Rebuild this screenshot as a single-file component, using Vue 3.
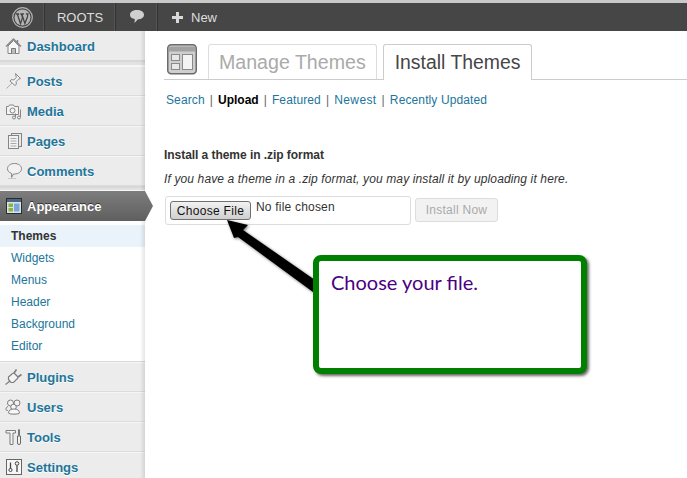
<script setup>
const groupOne = [
  { label: 'Posts', icon: 'posts' },
  { label: 'Media', icon: 'media' },
  { label: 'Pages', icon: 'pages' },
  { label: 'Comments', icon: 'comments' },
]
const subItems = ['Widgets', 'Menus', 'Header', 'Background', 'Editor']
const groupTwo = [
  { label: 'Plugins', icon: 'plugins' },
  { label: 'Users', icon: 'users' },
  { label: 'Tools', icon: 'tools' },
  { label: 'Settings', icon: 'settings' },
]
const links = [
  { label: 'Search' },
  { label: 'Upload', current: true },
  { label: 'Featured' },
  { label: 'Newest' },
  { label: 'Recently Updated', last: true },
]
</script>

<template>
  <div class="page">
    <header class="bar">
      <div class="bar-item wp">
        <svg width="21" height="21" viewBox="0 0 21 21">
          <circle cx="10.5" cy="10.5" r="9.8" fill="none" stroke="#b5b5b5" stroke-width="1.2" />
          <circle cx="10.5" cy="10.5" r="8" fill="#b5b5b5" />
          <path d="M3.800 7h3.400M8.300 7h3.600M13.800 6.800h2.800M5.400 7.200 8.500 16.600l2-6-1-3.400M9.900 7.200l3 9.400 2.600-6.800c.5-1.400.2-2.200-.6-3" fill="none" stroke="#464646" stroke-width="1.300" />
        </svg>
      </div>
      <div class="bar-item roots">ROOTS</div>
      <div class="bar-item bubble">
        <svg width="16" height="16" viewBox="0 0 16 16">
          <path d="M8 1c4 0 7 1.800 7 4.700 0 2.800-3 4.600-6 4.600L5.500 14l.3-3.900C3 9.600 1 8.200 1 5.700 1 2.800 4 1 8 1z" fill="#cfcfcf" />
        </svg>
      </div>
      <div class="bar-item new"><span class="plus"></span><span>New</span></div>
    </header>

    <div class="body">
      <aside class="side">
        <div class="item first">
          <svg class="ico" width="18" height="18" viewBox="0 0 18 18" fill="none" stroke="#858585">
            <path d="M1 9.500 8.500 2l7.500 7.500M12.500 3v3" stroke-width="1.400" />
            <path d="M3 9v7.500h11V9L8.500 3.500z" fill="#f7f7f7" />
            <path d="M6.500 16.500V11.500h4v5" stroke="#777" fill="#bdbdbd" />
          </svg>
          <span>Dashboard</span>
        </div>
        <div class="sep"></div>
        <div v-for="m in groupOne" :key="m.label" class="item">
          <svg class="ico" width="18" height="18" viewBox="0 0 18 18" fill="none" stroke="#858585">
            <template v-if="m.icon === 'posts'">
              <path d="M1.500 16.500 7 11" stroke="#aaa" />
              <path d="M10.500 1.500l5 5-2 .7-2.500 2.500.4 2.600-1.400 1.200L5 9l1.200-1.400 2.600.4 2.500-2.500z" fill="#f4f4f4" />
            </template>
            <template v-else-if="m.icon === 'media'">
              <path d="M1.500 4.500h2l1-1.500h4l1 1.500h4v8h-12z" fill="#f4f4f4" />
              <circle cx="7.500" cy="8.500" r="2.500" />
              <path d="M15.500 7.500v7.500M10.500 11.500v4" />
              <circle cx="9" cy="15.500" r="1.500" fill="#ececec" />
              <circle cx="14" cy="15.500" r="1.500" fill="#ececec" />
            </template>
            <template v-else-if="m.icon === 'pages'">
              <rect x="6.500" y="1.500" width="10" height="13" fill="#e8e8e8" />
              <rect x="3.500" y="3.500" width="10" height="13" fill="#f2f2f2" />
              <path d="M5.500 6.500h6M5.500 9h6M5.500 11.500h6M5.500 14h6" stroke="#aaa" />
            </template>
            <template v-else>
              <path d="M9.500 1.500c3.900 0 7 2.200 7 5.200s-3.100 5.300-7 5.300h-1L6.500 15.500l.2-4C4 10.500 2.500 8.800 2.500 6.700c0-3 3.100-5.200 7-5.200z" fill="#f2f2f2" />
              <path d="M3 16.500h8" stroke="#c8c8c8" />
            </template>
          </svg>
          <span>{{ m.label }}</span>
        </div>
        <div class="sep small"></div>
        <div class="current">
          <svg class="ico" width="16" height="16" viewBox="0 0 16 16">
            <rect x="0.500" y="0.500" width="15" height="15" fill="#d7e3ee" stroke="#2b2b2b" />
            <rect x="1" y="1" width="14" height="3" fill="#49657f" />
            <rect x="2.500" y="5.500" width="4.500" height="3.500" fill="#8fb23f" />
            <rect x="2.500" y="10" width="4.500" height="3.500" fill="#8fb23f" />
            <rect x="8" y="5.500" width="5.500" height="8" fill="#7ba7d8" />
          </svg>
          <span>Appearance</span>
        </div>
        <ul class="sub">
          <li class="on">Themes</li>
          <li v-for="s in subItems" :key="s">{{ s }}</li>
        </ul>
        <div v-for="m in groupTwo" :key="m.label" class="item">
          <svg class="ico" width="18" height="18" viewBox="0 0 18 18" fill="none" stroke="#7d7d7d">
            <template v-if="m.icon === 'plugins'">
              <path d="M.5 16.500 5 13" stroke-width="1.200" />
              <path d="M3.500 9l4-3.500 1.500-.5 4 4-.5 1.500L8.500 14.500l-2.500 0-2.500-3z" fill="#f4f4f4" stroke-width="1.200" />
              <path d="M9 5l2.500-3.500M13 9l3.500-2.500" stroke-width="1.600" />
            </template>
            <template v-else-if="m.icon === 'users'">
              <circle cx="5.500" cy="5" r="3" fill="#f2f2f2" />
              <circle cx="12" cy="5" r="3" fill="#f2f2f2" />
              <circle cx="8.500" cy="9" r="2.800" fill="#f7f7f7" />
              <path d="M3.500 15c0-2.700 2.300-4 5.500-4s5.500 1.300 5.500 4c0 1.500-11 1.500-11 0z" fill="#f7f7f7" />
              <path d="M3 8.500c-1.500.5-2 1.500-2 3 0 .8.700 1 1.800 1" />
            </template>
            <template v-else-if="m.icon === 'tools'">
              <path d="M1 2.500h9.500v2.500H8v11.500H5V5H1z" fill="#f2f2f2" />
              <path d="M14 1.500v6M12.500 8h3v7a1.500 1.500 0 0 1-3 0z" fill="#f2f2f2" stroke="#666" />
              <path d="M14 1.500v6" stroke="#666" stroke-width="1.500" />
            </template>
            <template v-else>
              <rect x="1.500" y="1.500" width="15" height="15" stroke="#666" fill="#f7f7f7" />
              <circle cx="5.500" cy="12" r="1.600" stroke="#444" />
              <circle cx="12" cy="5.500" r="1.800" stroke="#444" />
              <path d="M5.500 4.500v6M12 7.500V14" stroke="#444" stroke-width="1.300" />
            </template>
          </svg>
          <span>{{ m.label }}</span>
        </div>
      </aside>

      <main class="content">
        <div class="tabs">
          <div class="screen-ico">
            <svg width="30" height="31" viewBox="0 0 30 31">
              <rect x="0.750" y="0.750" width="28.500" height="29" rx="3.500" fill="#cfcfcf" stroke="#6b6b6b" stroke-width="1.500" />
              <rect x="2" y="2.500" width="26" height="5" fill="#a2a2a2" />
              <rect x="4.500" y="10.500" width="8" height="6" fill="#e8e8e8" stroke="#8a8a8a" />
              <rect x="4.500" y="19.500" width="8" height="6" fill="#e8e8e8" stroke="#8a8a8a" />
              <rect x="15.500" y="10.500" width="10" height="15" fill="#f4f4f4" stroke="#8a8a8a" />
            </svg>
          </div>
          <div class="tab manage">Manage Themes</div>
          <div class="tab active">Install Themes</div>
        </div>

        <nav class="links">
          <span v-for="l in links" :key="l.label" class="link-wrap">
            <span :class="l.current ? 'cur' : 'lnk'">{{ l.label }}</span>
            <span v-if="!l.last" class="pipe">|</span>
          </span>
        </nav>

        <h4 class="h">Install a theme in .zip format</h4>
        <p class="note">If you have a theme in a .zip format, you may install it by uploading it here.</p>

        <div class="form">
          <div class="file">
            <span class="choose">Choose File</span>
            <span class="none">No file chosen</span>
          </div>
          <span class="install">Install Now</span>
        </div>
      </main>
    </div>

    <svg class="arrow" width="100" height="90" viewBox="0 0 100 90">
      <path d="M2 2 23 7 18 12 90 62 88 74 13 19 9 20Z" fill="#000" />
    </svg>
    <div class="callout">Choose your file.</div>
  </div>
</template>

<style>
html, body { margin: 0; padding: 0; background: #fff; overflow: hidden; }
</style>

<style scoped>
.page {
  position: relative;
  width: 687px;
  height: 478px;
  overflow: hidden;
  font-family: "Liberation Sans", Arial, sans-serif;
  background: #fff;
}
.bar {
  display: flex;
  height: 28px;
  background: #464646;
  border-top: 3px solid #c9c9c9;
  color: #ddd;
  font-size: 13px;
}
.bar-item {
  display: flex;
  align-items: center;
  justify-content: center;
  height: 28px;
  border-right: 1px solid #333;
  box-shadow: inset -1px 0 0 #555;
  box-sizing: border-box;
}
.wp { width: 45px; }
.roots { width: 71px; }
.bubble { width: 42px; }
.new {
  width: 76px;
  border-right: 0;
  box-shadow: none;
  gap: 8px;
  justify-content: flex-start;
  padding-left: 14px;
}
.plus {
  width: 11px;
  height: 11px;
  background:
    linear-gradient(#d8d8d8, #d8d8d8) center / 11px 3px no-repeat,
    linear-gradient(#d8d8d8, #d8d8d8) center / 3px 11px no-repeat;
}
.body { display: flex; height: 447px; }
.side {
  width: 145px;
  flex: none;
  background: #ececec;
  box-sizing: border-box;
  position: relative;
}
.side::after {
  content: "";
  position: absolute;
  top: 0;
  right: 0;
  bottom: 0;
  width: 5px;
  background: linear-gradient(to right, rgba(0,0,0,0), rgba(0,0,0,.1));
  pointer-events: none;
}
.item {
  display: flex;
  align-items: center;
  height: 30px;
  box-sizing: border-box;
  border-bottom: 1px solid #dcdcdc;
  border-top: 1px solid #f6f6f6;
  padding-left: 5px;
  gap: 4px;
  color: #21759b;
  font-weight: bold;
  font-size: 13px;
  text-shadow: 0 1px 0 #fff;
}
.item.first { border-top: 0; height: 29px; border-bottom: 0; padding-top: 1px; }
.ico { flex: none; }
.sep {
  height: 6px;
  background: #e2e2e2;
  border-top: 2px solid #d8d8d8;
  border-bottom: 1px solid #f6f6f6;
  box-sizing: border-box;
}
.sep.small { height: 5px; }
.current {
  position: relative;
  z-index: 1;
  display: flex;
  align-items: center;
  width: 153px;
  height: 30px;
  box-sizing: border-box;
  padding-left: 6px;
  gap: 5px;
  color: #fff;
  font-weight: bold;
  font-size: 13px;
  text-shadow: 0 -1px 0 #333;
  background: linear-gradient(#7d7d7d, #5f5f5f);
  clip-path: polygon(0 0, 145px 0, 153px 50%, 145px 100%, 0 100%);
}
.sub {
  list-style: none;
  margin: 0;
  padding: 4px 0;
  background: #fff;
  border-bottom: 1px solid #d8d8d8;
  font-size: 12px;
  color: #21759b;
}
.sub li {
  height: 22px;
  line-height: 22px;
  padding-left: 11px;
}
.sub li.on {
  color: #333;
  font-weight: bold;
  background: #eaf2fa;
}
.content {
  flex: 1;
  padding: 13px 0 0 15px;
  min-width: 0;
}
.tabs {
  display: flex;
  align-items: flex-end;
  height: 35px;
  margin-left: 4px;
  border-bottom: 1px solid #ccc;
}
.screen-ico {
  width: 41px;
  height: 35px;
  margin-left: 3px;
  flex: none;
}
.screen-ico svg { display: block; }
.tab {
  height: 35px;
  box-sizing: border-box;
  padding: 0 11px;
  border: 1px solid #ddd;
  border-bottom: 0;
  border-radius: 3px 3px 0 0;
  margin-right: 6px;
  line-height: 34px;
  color: #aaa;
  background: #fff;
}
.tab.manage { font-size: 19.6px; padding: 0 10px; }
.tab.active {
  height: 36px;
  margin-bottom: -1px;
  color: #464646;
  border-color: #ccc;
  font-size: 19.4px;
}
.links {
  display: flex;
  margin: 13px 0 0 6px;
  font-size: 12px;
  line-height: 14px;
  height: 14px;
  letter-spacing: .12px;
}
.link-wrap { display: inline-flex; white-space: nowrap; }
.link-wrap:nth-child(4) .lnk { letter-spacing: .4px; }
.lnk { color: #21759b; }
.cur { color: #000; font-weight: bold; letter-spacing: 0; }
.pipe { color: #666; margin: 0 5px; }
.h {
  margin: 41px 0 0 4px;
  font-size: 12px;
  line-height: 14px;
  color: #333;
  letter-spacing: -.05px;
}
.note {
  margin: 10px 0 0 4px;
  font-size: 12px;
  line-height: 14px;
  font-style: italic;
  color: #333;
  white-space: nowrap;
  letter-spacing: .13px;
}
.form {
  display: flex;
  margin: 10px 0 0 5px;
  align-items: flex-start;
}
.file {
  display: flex;
  align-items: flex-start;
  width: 246px;
  height: 29px;
  box-sizing: border-box;
  border: 1px solid #ddd;
  border-radius: 3px;
  padding: 4px 0 0 4px;
  gap: 5px;
}
.choose {
  width: 81px;
  height: 19px;
  box-sizing: border-box;
  border: 1px solid #707070;
  border-radius: 3px;
  background: linear-gradient(#f2f2f2, #cfcfcf);
  color: #111;
  font-size: 12px;
  line-height: 19px;
  text-align: center;
  letter-spacing: .3px;
}
.none {
  font-size: 12px;
  line-height: 14px;
  color: #333;
  margin-top: -1px;
  letter-spacing: .2px;
}
.install {
  width: 83px;
  height: 24px;
  margin: 2px 0 0 4px;
  box-sizing: border-box;
  border: 1px solid #ddd;
  border-radius: 3px;
  background: #f2f2f2;
  color: #aaa;
  font-size: 12px;
  line-height: 22px;
  text-align: center;
  letter-spacing: .25px;
}
.arrow {
  position: absolute;
  left: 225px;
  top: 218px;
  filter: drop-shadow(1px 1px 1.5px rgba(0,0,0,.55));
}
.callout {
  position: absolute;
  left: 313px;
  top: 255px;
  width: 274px;
  height: 119px;
  box-sizing: border-box;
  border: 6px solid #008000;
  border-radius: 8px;
  background: #fff;
  box-shadow: 2px 2px 3px rgba(0,0,0,.6);
  padding: 9px 0 0 12px;
  font-family: Lato, "Open Sans", sans-serif;
  font-size: 20px;
  color: #4b0082;
}
</style>
